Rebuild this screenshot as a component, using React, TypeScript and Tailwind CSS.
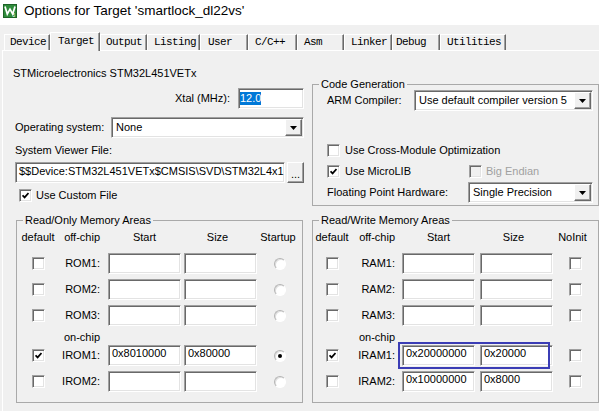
import React from "react";

// Classic Windows 3D edges
const sunken =
  "border border-t-[#a0a0a0] border-l-[#a0a0a0] border-b-white border-r-white shadow-[inset_1px_1px_0_#696969,inset_-1px_-1px_0_#e3e3e3]";
const raised =
  "border border-t-white border-l-white border-b-[#696969] border-r-[#696969] shadow-[inset_-1px_-1px_0_#a0a0a0]";

function Field({ value = "", className = "" }: { value?: string; className?: string }) {
  return (
    <div
      className={`h-[21px] shrink-0 bg-white ${sunken} pl-[3px] pt-[1px] leading-[13px] whitespace-nowrap overflow-hidden ${className}`}
    >
      {value}
    </div>
  );
}

function Box({ checked = false, disabled = false }: { checked?: boolean; disabled?: boolean }) {
  return (
    <span
      className={`inline-flex shrink-0 w-[13px] h-[13px] items-center justify-center ${sunken} ${
        disabled ? "bg-[#f0f0f0]" : "bg-white"
      }`}
    >
      {checked && (
        <svg width="7" height="7" viewBox="0 0 7 7">
          <path d="M0.6 3.3 L2.6 5.4 L6.5 1.1" fill="none" stroke="#000" strokeWidth="1.7" />
        </svg>
      )}
    </span>
  );
}

function Radio({ checked = false }: { checked?: boolean }) {
  return (
    <span className="inline-flex w-[12px] h-[12px] rounded-full items-center justify-center bg-white border border-[#b4b4b4] border-b-white border-r-white shadow-[inset_1px_1px_0_#e0e0e0]">
      {checked && <span className="w-[4px] h-[4px] rounded-full bg-black" />}
    </span>
  );
}

function Combo({ value, className = "" }: { value: string; className?: string }) {
  return (
    <div className={`h-[21px] shrink-0 flex bg-white p-[1px] ${sunken} ${className}`}>
      <span className="flex-1 pl-[3px] leading-[17px] whitespace-nowrap overflow-hidden">{value}</span>
      <span className={`w-[17px] flex items-center justify-center bg-[#f0f0f0] ${raised}`}>
        <svg width="7" height="4" viewBox="0 0 7 4">
          <path d="M0 0 H7 L3.5 4 Z" fill="#000" />
        </svg>
      </span>
    </div>
  );
}

function Group({
  title,
  className = "",
  children,
}: {
  title: string;
  className?: string;
  children: React.ReactNode;
}) {
  return (
    <fieldset className={`m-0 p-0 min-w-0 border border-[#a9a9a9] ${className}`}>
      <legend className="ml-[6px] px-[2px] leading-[14px]">{title}</legend>
      {children}
    </fieldset>
  );
}

const tabs = [
  { label: "Device", w: "w-[46px]", pl: "pl-[5px]" },
  { label: "Target", w: "w-[50px]", pl: "pl-[7px]", active: true },
  { label: "Output", w: "w-[47px]", pl: "pl-[5px]" },
  { label: "Listing", w: "w-[53px]", pl: "pl-[6px]" },
  { label: "User", w: "w-[48px]", pl: "pl-[7px]" },
  { label: "C/C++", w: "w-[49px]", pl: "pl-[6px]" },
  { label: "Asm", w: "w-[47px]", pl: "pl-[6px]" },
  { label: "Linker", w: "w-[48px]", pl: "pl-[6px]" },
  { label: "Debug", w: "w-[48px]", pl: "pl-[3px]" },
  { label: "Utilities", w: "w-[66px]", pl: "pl-[6px]" },
];

type Cols = { c1: string; c2: string; in1: string; in2: string };

const romCols: Cols = { c1: "w-[42px]", c2: "w-[42px] pr-[1px]", in1: "ml-[7px] w-[73px]", in2: "ml-[3px] w-[73px]" };
const ramCols: Cols = { c1: "w-[38px]", c2: "w-[44px]", in1: "ml-[7px] w-[73px]", in2: "ml-[5px] w-[73px]" };

function MemRow({
  cols,
  label,
  start = "",
  size = "",
  def = false,
  last,
  className = "",
  children,
}: {
  cols: Cols;
  label: string;
  start?: string;
  size?: string;
  def?: boolean;
  last: React.ReactNode;
  className?: string;
  children?: React.ReactNode;
}) {
  return (
    <div className={`relative flex items-center h-[21px] ${className}`}>
      <div className={`${cols.c1} flex justify-center`}>
        <Box checked={def} />
      </div>
      <div className={`${cols.c2} text-right`}>{label}</div>
      <Field value={start} className={cols.in1} />
      <Field value={size} className={cols.in2} />
      <div className="flex-1 flex justify-center">{last}</div>
      {children}
    </div>
  );
}

function MemHeader({ cols, lastLabel, lastClass }: { cols: Cols; lastLabel: string; lastClass: string }) {
  return (
    <div className="mt-[3px] flex h-[14px] leading-[14px]">
      <div className={`${cols.c1} text-center`}>default</div>
      <div className={`${cols.c2} text-right`}>off-chip</div>
      <div className={`${cols.in1} text-center`}>Start</div>
      <div className={`${cols.in2} text-center pr-[6px]`}>Size</div>
      <div className={`flex-1 text-center ${lastClass}`}>{lastLabel}</div>
    </div>
  );
}

export default function App() {
  return (
    <div className="w-[599px] h-[411px] overflow-hidden bg-[#f0f0f0] text-[11px] text-black font-['Liberation_Sans',Arial,sans-serif]">
      {/* window caption */}
      <div className="h-[25px] bg-white flex items-center pb-[3px]">
        <svg className="ml-[3px]" width="14" height="14" viewBox="0 0 14 14">
          <rect width="14" height="14" fill="#2f8b3b" />
          <rect x="0.5" y="0.5" width="13" height="13" fill="none" stroke="#1d6427" />
          <path d="M2 2.6 L4.3 10 L7 5.2 L9.7 10 L12 2.6" fill="none" stroke="#fff" strokeWidth="1.7" />
          <text x="9.6" y="13.4" fontSize="4.5" fill="#fff" fontFamily="Liberation Sans">5</text>
        </svg>
        <span className="ml-[7px] text-[13.5px] leading-[18px]">Options for Target 'smartlock_dl22vs'</span>
      </div>

      {/* tab strip */}
      <div className="h-[25px] flex items-end pl-[4px] font-['Liberation_Mono',monospace] text-[11px] tracking-[-0.6px]">
        {tabs.map((t) =>
          t.active ? (
            <div
              key={t.label}
              className={`${t.w} ${t.pl} relative z-10 -mb-px h-[19px] leading-[17px] bg-[#f0f0f0] border-t border-l border-white border-r border-r-[#696969] shadow-[inset_-1px_0_0_#a0a0a0] whitespace-pre`}
            >
              {t.label}
            </div>
          ) : (
            <div
              key={t.label}
              className={`${t.w} ${t.pl} h-[16px] leading-[15px] border-t border-l border-white border-r border-r-[#696969] shadow-[inset_-1px_0_0_#a0a0a0] whitespace-pre`}
            >
              {t.label}
            </div>
          )
        )}
      </div>

      {/* Target page */}
      <div className="ml-[2px] h-[361px] border-t border-l border-white flex pl-[10px] gap-[8px]">
        {/* left column */}
        <div className="w-[291px] flex flex-col">
          <div className="pt-[15px] leading-[14px]">STMicroelectronics STM32L451VETx</div>

          <div className="mt-[8px] flex items-center justify-end">
            <span>Xtal (MHz):</span>
            <div className={`ml-[8px] w-[66px] h-[21px] bg-white ${sunken} pl-[1px] pt-[1px]`}>
              <span className="inline-block bg-[#0078d7] text-white leading-[13px]">12.0</span>
            </div>
          </div>

          <div className="mt-[8px] flex items-center">
            <span className="w-[98px] pl-[2px]">Operating system:</span>
            <Combo value="None" className="w-[193px]" />
          </div>

          <div className="mt-[5px] pl-[2px] leading-[14px]">System Viewer File:</div>

          <div className="mt-[5px] flex pl-[2px]">
            <Field value="$$Device:STM32L451VETx$CMSIS\SVD\STM32L4x1" className="w-[270px] pt-[2px]" />
            <button
              className={`ml-[2px] w-[17px] h-[21px] bg-[#f0f0f0] ${raised} flex items-end justify-center pb-[3px] leading-[10px]`}
            >
              ...
            </button>
          </div>

          <div className="mt-[5px] h-[14px] flex items-center pl-[6px]">
            <Box checked />
            <span className="ml-[4px]">Use Custom File</span>
          </div>

          <Group title="Read/Only Memory Areas" className="mt-[11px] ml-[3px] w-[287px] pb-[10px]">
            <MemHeader cols={romCols} lastLabel="Startup" lastClass="pr-[3px]" />
            <MemRow cols={romCols} label="ROM1:" last={<Radio />} className="mt-[9px]" />
            <MemRow cols={romCols} label="ROM2:" last={<Radio />} className="mt-[5px]" />
            <MemRow cols={romCols} label="ROM3:" last={<Radio />} className="mt-[5px]" />
            <div className="mt-[4px] h-[14px] leading-[14px] flex">
              <div className={romCols.c1} />
              <div className={`${romCols.c2} text-right`}>on-chip</div>
            </div>
            <MemRow cols={romCols} label="IROM1:" start="0x8010000" size="0x80000" def last={<Radio checked />} className="mt-[1px]" />
            <MemRow cols={romCols} label="IROM2:" last={<Radio />} className="mt-[5px]" />
          </Group>
        </div>

        {/* right column */}
        <div className="w-[287px] flex flex-col">
          <Group title="Code Generation" className="mt-[26px] pb-[2px]">
            <div className="-mt-[1px] flex items-center pl-[14px] h-[21px]">
              <span className="w-[87px]">ARM Compiler:</span>
              <Combo value="Use default compiler version 5" className="w-[179px]" />
            </div>
            <div className="mt-[32px] flex items-center pl-[14px] h-[14px]">
              <Box />
              <span className="ml-[5px]">Use Cross-Module Optimization</span>
            </div>
            <div className="mt-[7px] flex items-center pl-[14px] h-[14px]">
              <div className="w-[142px] flex items-center">
                <Box checked />
                <span className="ml-[5px]">Use MicroLIB</span>
              </div>
              <Box disabled />
              <span className="ml-[4px] text-[#a0a0a0]">Big Endian</span>
            </div>
            <div className="mt-[4px] flex items-center pl-[14px] h-[21px]">
              <span className="w-[141px]">Floating Point Hardware:</span>
              <Combo value="Single Precision" className="w-[125px]" />
            </div>
          </Group>

          <Group title="Read/Write Memory Areas" className="mt-[7px] pb-[10px]">
            <MemHeader cols={ramCols} lastLabel="NoInit" lastClass="pr-[6px]" />
            <MemRow cols={ramCols} label="RAM1:" last={<Box />} className="mt-[9px]" />
            <MemRow cols={ramCols} label="RAM2:" last={<Box />} className="mt-[5px]" />
            <MemRow cols={ramCols} label="RAM3:" last={<Box />} className="mt-[5px]" />
            <div className="mt-[4px] h-[14px] leading-[14px] flex">
              <div className={ramCols.c1} />
              <div className={`${ramCols.c2} text-right`}>on-chip</div>
            </div>
            <MemRow cols={ramCols} label="IRAM1:" start="0x20000000" size="0x20000" def last={<Box />} className="mt-[1px]">
              <div className="absolute left-[85px] -top-[3px] w-[152px] h-[27px] border-2 border-[#3b3db5]" />
            </MemRow>
            <MemRow cols={ramCols} label="IRAM2:" start="0x10000000" size="0x8000" last={<Box />} className="mt-[5px]" />
          </Group>
        </div>
      </div>
    </div>
  );
}
